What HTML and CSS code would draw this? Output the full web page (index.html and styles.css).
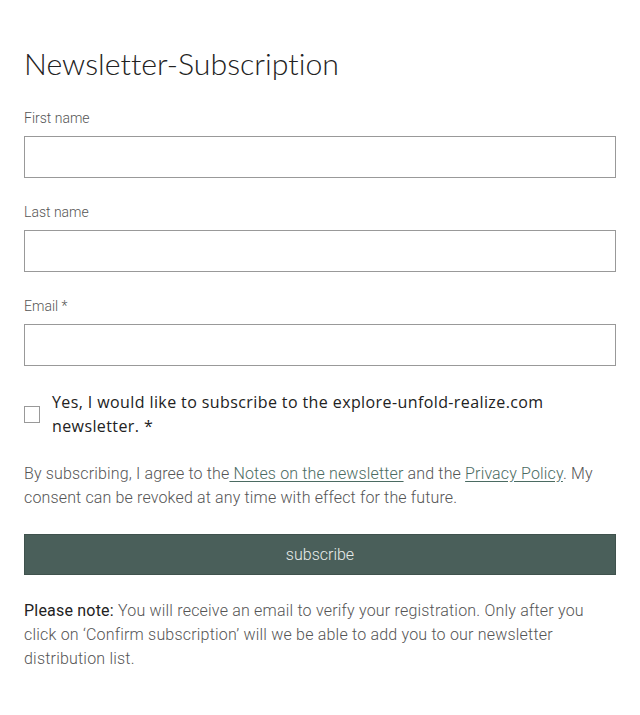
FILE: index.html
```html
<!DOCTYPE html>
<html lang="en">
<head>
<meta charset="utf-8">
<title>Newsletter-Subscription</title>
<link rel="stylesheet" href="styles.css">
</head>
<body>
<main class="page">
  <h1 class="title">Newsletter-Subscription</h1>
  <form class="form">
    <div class="field">
      <label class="label" for="fn">First name</label>
      <input class="input" id="fn" type="text">
    </div>
    <div class="field">
      <label class="label" for="ln">Last name</label>
      <input class="input" id="ln" type="text">
    </div>
    <div class="field">
      <label class="label" for="em">Email *</label>
      <input class="input" id="em" type="email">
    </div>
    <label class="check">
      <span class="box"></span>
      <span class="check-text">Yes, I would like to subscribe to the explore-unfold-realize.com newsletter. *</span>
    </label>
    <p class="consent">By subscribing, I agree to the<a class="link" href="#"> Notes on the newsletter</a> and the <a class="link" href="#">Privacy Policy</a>. My consent can be revoked at any time with effect for the future.</p>
    <button class="submit" type="button">subscribe</button>
    <p class="note"><span class="strong">Please note:</span> You will receive an email to verify your registration. Only after you click on ‘Confirm subscription’ will we be able to add you to our newsletter distribution list.</p>
  </form>
</main>
</body>
</html>
```

FILE: styles.css
```css
* { box-sizing: border-box; }
html, body { margin: 0; padding: 0; background: #fff; }
body {
  font-family: Roboto, "Open Sans", sans-serif;
  font-weight: 300;
  color: #555;
}
.page { padding: 0 24px; }
.title {
  font-family: Lato, sans-serif;
  font-weight: 300;
  font-size: 30.3px;
  line-height: 36px;
  color: #222;
  margin: 0;
  padding-top: 45px;
  padding-bottom: 27px;
  font-variant-ligatures: none;
}
.form { display: flex; flex-direction: column; }
.field { display: flex; flex-direction: column; margin-bottom: 24px; }
.label {
  font-size: 14px;
  line-height: 20px;
  margin-bottom: 8px;
  color: #555;
}
.input {
  height: 42px;
  width: 100%;
  border: 1px solid #999;
  border-radius: 0;
  background: #fff;
  margin: 0;
}
.check {
  display: flex;
  align-items: center;
  gap: 12px;
  margin-bottom: 24px;
}
.box {
  flex: none;
  width: 16px;
  height: 17px;
  border: 1px solid #999;
  background: #fff;
}
.check-text {
  font-family: "Open Sans", Roboto, sans-serif;
  font-size: 16px;
  line-height: 24px;
  color: #222;
  font-weight: 400;
  letter-spacing: 0.4px;
}
.consent {
  margin: 0 0 24px;
  font-size: 16px;
  line-height: 24px;
  letter-spacing: 0.15px;
}
.link { color: #4b6b62; text-decoration: underline; text-underline-offset: 2px; }
.submit {
  height: 41px;
  width: 100%;
  background: #4a5f5a;
  border: 1px solid #3f524d;
  color: #e8ecea;
  font-family: Roboto, sans-serif;
  font-weight: 300;
  font-size: 16px;
  margin: 0 0 24px;
  padding: 0;
}
.note {
  margin: 0;
  font-size: 16px;
  line-height: 24px;
  letter-spacing: 0.2px;
}
.strong { color: #222; font-weight: 400; }
```
